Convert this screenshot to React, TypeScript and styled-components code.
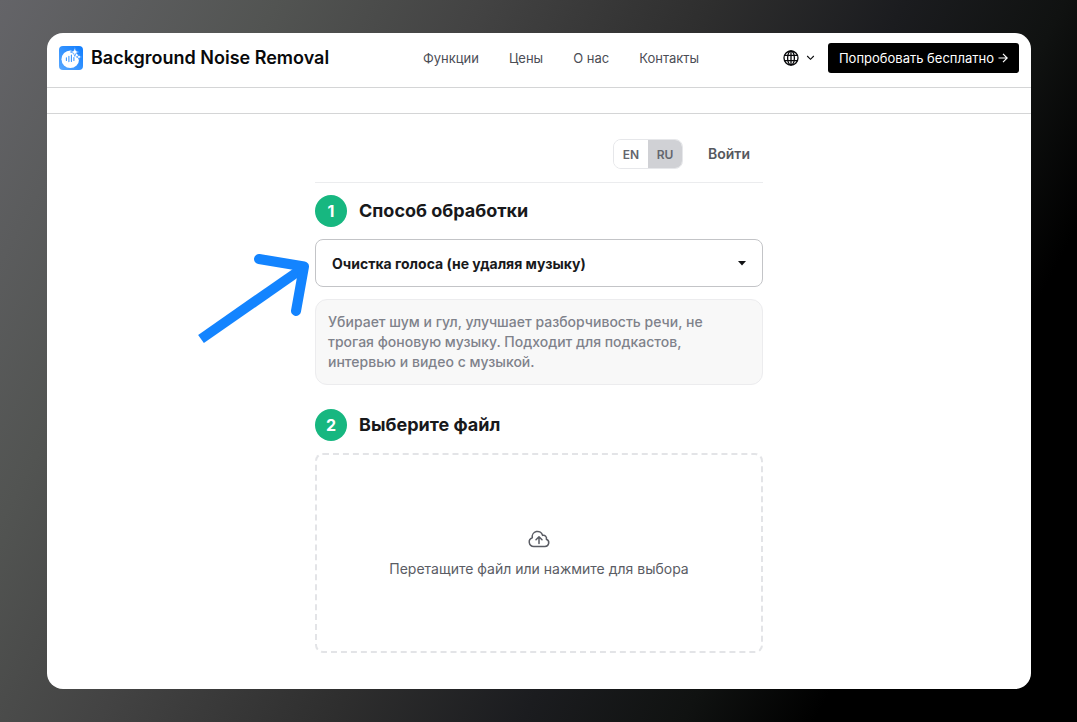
import React from "react";
import styled, { createGlobalStyle } from "styled-components";

const GlobalStyle = createGlobalStyle`
  *, *::before, *::after { box-sizing: border-box; }
  body {
    margin: 0;
    font-family: Inter, "Liberation Sans", sans-serif;
    color: #18191b;
  }
  button, select, input { font: inherit; color: inherit; }
  h2, p { margin: 0; }
`;

const Backdrop = styled.div`
  min-height: 100vh;
  display: flex;
  padding: 33px 46px 33px 47px;
  background: linear-gradient(118deg, #646468 0%, #525452 19%, #434343 33%, #2e2e2e 49%, #1b1c1f 62%, #101211 73%, #000 82%);
`;

const Window = styled.div`
  flex: 1;
  min-width: 0;
  background: #fff;
  border-radius: 16px;
  overflow: hidden;
`;

const Header = styled.header`
  display: flex;
  align-items: center;
  justify-content: space-between;
  padding: 10px 12px 14px;
  border-bottom: 1px solid #d4d5d6;
`;

const SubBar = styled.div`
  height: 26px;
  border-bottom: 1px solid #d4d5d6;
`;

const Brand = styled.a`
  display: flex;
  align-items: center;
  gap: 8px;
  color: #08090b;
  font-size: 18px;
  font-weight: 600;
  line-height: 24px;
  text-decoration: none;
  white-space: nowrap;
`;

const Nav = styled.nav`
  display: flex;
  gap: 30px;
  padding-left: 10px;
`;

const NavLink = styled.a`
  color: #4b4d55;
  font-size: 13px;
  line-height: 20px;
  text-decoration: none;
`;

const Actions = styled.div`
  display: flex;
  align-items: center;
  gap: 13px;
`;

const LocaleButton = styled.button`
  display: flex;
  align-items: center;
  gap: 7px;
  padding: 0;
  border: 0;
  background: none;
  color: #08090b;
`;

const TryButton = styled.button`
  display: flex;
  align-items: center;
  gap: 4px;
  height: 30px;
  padding: 0 11px;
  border: 0;
  border-radius: 3px;
  background: #000;
  color: #fff;
  font-size: 13px;
  white-space: nowrap;
`;

const Main = styled.main`
  width: 100%;
  max-width: 448px;
  margin: 0 auto;
  padding: 25px 0 36px;
`;

const AccountBar = styled.div`
  display: flex;
  align-items: center;
  justify-content: flex-end;
  gap: 25px;
  padding: 0 13px 13px 0;
  border-bottom: 1px solid #ebecee;
`;

const LangSwitch = styled.div`
  display: flex;
  width: 70px;
  height: 30px;
  border: 1px solid #e6e7ea;
  border-radius: 8px;
  overflow: hidden;
`;

const LangOption = styled.button<{ $active?: boolean }>`
  flex: 1;
  padding: 0;
  border: 0;
  background: ${(p) => (p.$active ? "#d0d1d5" : "#fff")};
  color: #63656d;
  font-size: 12px;
  font-weight: 600;
`;

const SignIn = styled.a`
  color: #56585e;
  font-size: 14px;
  font-weight: 600;
  line-height: 20px;
  text-decoration: none;
`;

const StepHead = styled.div<{ $spaced?: boolean }>`
  display: flex;
  align-items: center;
  gap: 12px;
  margin: ${(p) => (p.$spaced ? "24px" : "12px")} 0 12px;
`;

const StepNumber = styled.span`
  display: grid;
  place-items: center;
  width: 32px;
  height: 32px;
  border-radius: 50%;
  background: #17b780;
  color: #fff;
  font-size: 16px;
  font-weight: 700;
`;

const StepTitle = styled.h2`
  font-size: 18px;
  font-weight: 700;
  line-height: 28px;
`;

const SelectWrap = styled.div`
  display: grid;
  align-items: center;
  > * { grid-area: 1 / 1; }
  > svg { justify-self: end; margin-right: 16px; pointer-events: none; }
`;

const ModeSelect = styled.select`
  appearance: none;
  width: 100%;
  height: 48px;
  padding: 0 40px 0 16px;
  border: 1px solid #c3c4c7;
  border-radius: 8px;
  background: #fff;
  font-size: 14px;
  font-weight: 700;
`;

const Hint = styled.p`
  margin-top: 12px;
  padding: 12px;
  border: 1px solid #ececee;
  border-radius: 12px;
  background: #f8f8f8;
  color: #7f828b;
  font-size: 14px;
  font-weight: 500;
  line-height: 20px;
`;

const DropZone = styled.button`
  display: flex;
  flex-direction: column;
  align-items: center;
  justify-content: center;
  gap: 8px;
  width: 100%;
  height: 200px;
  padding: 0;
  border: 2px dashed #e3e4e7;
  border-radius: 8px;
  background: #fff;
  color: #5a5c64;
  font-size: 14px;
  line-height: 20px;
`;

const PointerAnchor = styled.div`
  position: relative;
`;

const Pointer = styled.svg`
  position: absolute;
  right: 100%;
  top: 12px;
  margin-right: 3px;
`;

function BrandLogo() {
  return (
    <svg width="24" height="24" viewBox="0 0 24 24" aria-hidden="true">
      <defs>
        <linearGradient id="brand-fill" x1="1" y1="0" x2="0" y2="1">
          <stop offset="0" stopColor="#0d7cff" />
          <stop offset="1" stopColor="#5aa9ff" />
        </linearGradient>
      </defs>
      <rect width="24" height="24" rx="4" fill="url(#brand-fill)" />
      <circle cx="11.3" cy="13.2" r="8.8" fill="#fff" />
      <g stroke="#3a96ff" strokeWidth="1.1" strokeLinecap="round">
        <path d="M7.4 11.8v2.600M9.900 10.2v5.400M12.4 9v6.500M14.900 11.5v3" />
      </g>
      <path
        d="M15.8 1.6l1.2 3.2 3.2 1.2-3.2 1.2-1.2 3.2-1.2-3.2-3.2-1.2 3.2-1.2zM20 8.2l.8 1.9 1.9.8-1.9.8-.8 1.9-.8-1.9-1.9-.8 1.9-.8z"
        fill="#fff"
        stroke="#2d8dff"
        strokeWidth="0.7"
      />
    </svg>
  );
}

function GlobeIcon() {
  return (
    <svg width="16" height="16" viewBox="0 0 16 16" fill="none" stroke="currentColor" strokeWidth="1.3" aria-hidden="true">
      <circle cx="8" cy="8" r="7" />
      <ellipse cx="8" cy="8" rx="3.4" ry="7" />
      <path d="M8 1v14M1.6 5.4h12.8M1.6 10.6h12.8" />
    </svg>
  );
}

function ChevronIcon() {
  return (
    <svg width="9" height="6" viewBox="0 0 9 6" fill="none" stroke="currentColor" strokeWidth="1.1" aria-hidden="true">
      <path d="M1.2 1l3.300 3.300L7.800 1" />
    </svg>
  );
}

function ArrowIcon() {
  return (
    <svg width="10" height="10" viewBox="0 0 10 10" fill="none" stroke="currentColor" strokeWidth="1.2" aria-hidden="true">
      <path d="M.5 5h8.5M5 .8L9.2 5 5 9.2" />
    </svg>
  );
}

function CloudIcon() {
  return (
    <svg
      width="24"
      height="24"
      viewBox="0 0 24 24"
      fill="none"
      stroke="currentColor"
      strokeWidth="1.5"
      strokeLinecap="round"
      strokeLinejoin="round"
      aria-hidden="true"
    >
      <path d="M12 16.5V9.75m0 0 3 3m-3-3-3 3M6.75 19.5a4.5 4.5 0 0 1-1.41-8.775 5.25 5.25 0 0 1 10.233-2.33 3 3 0 0 1 3.758 3.848A3.752 3.752 0 0 1 18 19.5H6.75Z" />
    </svg>
  );
}

function PointerArrow() {
  return (
    <Pointer width="114" height="94" viewBox="0 0 114 94" fill="none" stroke="#1384ff" strokeWidth="10" aria-hidden="true">
      <path d="M3 88L105 17" />
      <path d="M61 8L106 15.500L98 60" strokeLinecap="round" strokeLinejoin="round" />
    </Pointer>
  );
}

export default function App() {
  return (
    <>
      <GlobalStyle />
      <Backdrop>
        <Window>
          <Header>
            <Brand href="#">
              <BrandLogo />
              Background Noise Removal
            </Brand>
            <Nav>
              <NavLink href="#features">Функции</NavLink>
              <NavLink href="#pricing">Цены</NavLink>
              <NavLink href="#about">О нас</NavLink>
              <NavLink href="#contacts">Контакты</NavLink>
            </Nav>
            <Actions>
              <LocaleButton type="button" aria-label="Язык">
                <GlobeIcon />
                <ChevronIcon />
              </LocaleButton>
              <TryButton type="button">
                Попробовать бесплатно
                <ArrowIcon />
              </TryButton>
            </Actions>
          </Header>
          <SubBar />
          <Main>
            <AccountBar>
              <LangSwitch>
                <LangOption type="button">EN</LangOption>
                <LangOption type="button" $active>RU</LangOption>
              </LangSwitch>
              <SignIn href="#login">Войти</SignIn>
            </AccountBar>

            <StepHead>
              <StepNumber>1</StepNumber>
              <StepTitle id="mode-title">Способ обработки</StepTitle>
            </StepHead>
            <PointerAnchor>
              <SelectWrap>
                <ModeSelect aria-labelledby="mode-title">
                  <option>Очистка голоса (не удаляя музыку)</option>
                </ModeSelect>
                <svg width="10" height="5" viewBox="0 0 10 5" aria-hidden="true">
                  <path d="M1 0h8L5 4.500z" fill="#111214" />
                </svg>
              </SelectWrap>
              <PointerArrow />
            </PointerAnchor>
            <Hint>
              Убирает шум и гул, улучшает разборчивость речи, не трогая фоновую музыку. Подходит для подкастов,
              интервью и видео с музыкой.
            </Hint>

            <StepHead $spaced>
              <StepNumber>2</StepNumber>
              <StepTitle>Выберите файл</StepTitle>
            </StepHead>
            <DropZone type="button">
              <CloudIcon />
              Перетащите файл или нажмите для выбора
            </DropZone>
          </Main>
        </Window>
      </Backdrop>
    </>
  );
}
